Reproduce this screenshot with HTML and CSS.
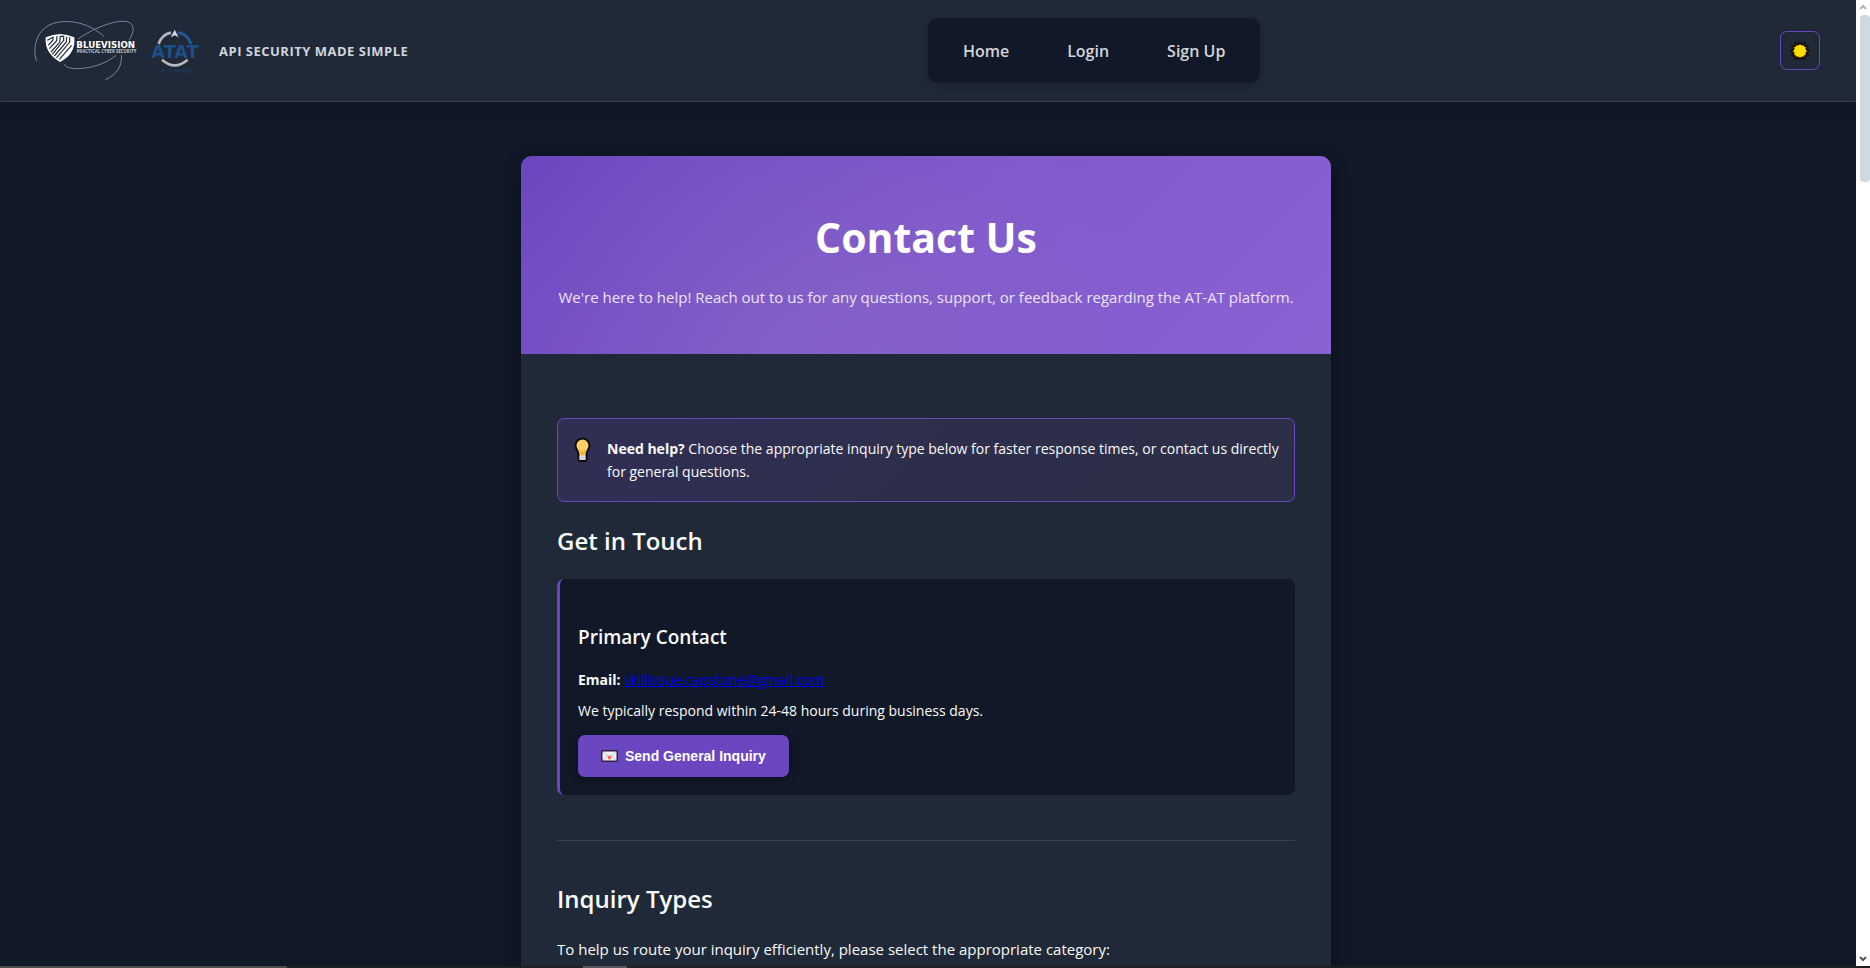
FILE: index.html
```html
<!DOCTYPE html>
<html lang="en">

<head>
  <meta charset="UTF-8">
  <meta name="viewport" content="width=device-width, initial-scale=1.0">
  <title>Contact Us</title>
  <link rel="stylesheet" href="styles.css">
</head>

<body>
  <div class="screen">
    <div class="page">
      <header class="header">
        <div class="brand">
          <svg class="logo-bluevision" viewBox="96 60 315 183" role="img" aria-label="Bluevision">
            <g fill="none" stroke="#8b98a9" stroke-width="2.5">
              <path d="M109 182C96 140 112 92 150 74c50-22 122-4 162 36" />
              <path d="M234 117c40-28 110-60 148-52 22 6 22 30 6 54" />
              <path d="M192 192c8 24 104 18 156-26" />
              <path d="M364 165c4 30-14 60-48 74" />
            </g>
            <path fill="#fff" d="M137 112q22-9 43-10 22 1 43 10 5 50-43 74-47-26-43-74z" />
            <g fill="none" stroke="#1f2937" stroke-width="3.500">
              <path d="M142 121l17-9v8l-14 16" />
              <path d="M148 146l22-24 1-14" />
              <path d="M153 156l26-29 2-18h10v12l-34 42" />
              <path d="M163 168l36-42 1-16" />
              <path d="M169 174l40-48v-14" />
              <path d="M178 178l37-42" />
            </g>
            <text class="logo-name" x="229" y="143">BLUEVISION</text>
            <text class="logo-tag" x="230" y="158">PRACTICAL CYBER SECURITY</text>
          </svg>
          <svg class="logo-atat" viewBox="447 84 156 138" role="img" aria-label="ATAT API Scanner">
            <g fill="none" stroke-width="8">
              <path stroke="#b5b8bd" d="M476 132a50 50 0 0 1 37-34" />
              <path stroke="#235b97" d="M533 97a50 50 0 0 1 40 35" />
              <path stroke="#b5b8bd" d="M486 179q38 34 77 0" />
            </g>
            <path fill="#d5d7da" d="M524 89l12 23-12-6-12 6z" />
            <text class="logo-word" x="525" y="175">ATAT</text>
            <text class="logo-scan" x="526" y="219">API SCANNER</text>
          </svg>
          <span class="tagline">API Security Made Simple</span>
        </div>

        <nav class="nav">
          <a href="#home">Home</a>
          <a href="#login">Login</a>
          <a href="#signup">Sign Up</a>
        </nav>

        <button class="theme-toggle" type="button" aria-label="Toggle theme">
          <svg width="20" height="20" viewBox="-10 -10 20 20">
            <path fill="#ffa000" stroke="#16130c" stroke-width="2" d="M0-9L2-6 4.500-7.800 5-5 7.800-4.500 6-2 9 0 6 2 7.800 4.500 5 5 4.500 7.800 2 6 0 9-2 6-4.500 7.800-5 5-7.800 4.500-6 2-9 0-6-2-7.800-4.500-5-5-4.500-7.800-2-6z" />
            <circle r="6" fill="#ffde00" />
          </svg>
        </button>
      </header>

      <main class="main">
        <article class="card">
          <div class="hero">
            <h1>Contact Us</h1>
            <p>We're here to help! Reach out to us for any questions, support, or feedback regarding the AT-AT platform.</p>
          </div>

          <div class="content">
            <div class="callout">
              <svg class="bulb" width="17" height="26" viewBox="0 0 17 26">
                <path fill="#ffd067" stroke="#0b0b0b" stroke-width="2" d="M8.500 1.500a7 7 0 0 1 7 7c0 4-3 5-3 9v4.500q0 2-2 2h-4q-2 0-2-2v-4.500c0-4-3-5-3-9a7 7 0 0 1 7-7z" />
                <path fill="#d7d4df" d="M5.500 18.500h6V23h-6z" />
                <path fill="none" stroke="#f0a71c" d="M5.500 13l1.500 2v3M11.500 13l-1.500 2v3M8.500 14v4" />
              </svg>
              <p><strong>Need help?</strong> Choose the appropriate inquiry type below for faster response times, or contact us directly for general questions.</p>
            </div>

            <h2>Get in Touch</h2>
            <section class="contact-box">
              <h3>Primary Contact</h3>
              <p><strong>Email:</strong> <a href="mailto:skillissue.capstone@gmail.com">skillissue.capstone@gmail.com</a></p>
              <p>We typically respond within 24-48 hours during business days.</p>
              <button class="btn" type="button">
                <svg width="17" height="12" viewBox="0 0 17 12">
                  <rect x=".75" y=".75" width="15.500" height="10.500" rx="1" fill="#f1f1f3" stroke="#2c2143" stroke-width="1.500" />
                  <path fill="none" stroke="#c4c4cc" d="M2 2l6.500 5L15 2M2 10l4-4M15 10l-4-4" />
                  <circle cx="8.500" cy="7.500" r="2" fill="#f5705c" />
                </svg>
                <span>Send General Inquiry</span>
              </button>
            </section>

            <hr>

            <h2>Inquiry Types</h2>
            <p class="intro">To help us route your inquiry efficiently, please select the appropriate category:</p>
          </div>
        </article>
      </main>
    </div>

    <div class="scrollbar">
      <svg width="8" height="6" viewBox="0 0 8 6"><path d="M1 5l3-3 3 3" /></svg>
      <div class="thumb"></div>
      <svg class="down" width="8" height="6" viewBox="0 0 8 6"><path d="M1 1l3 3 3-3" /></svg>
    </div>
    <div class="edge"><span class="edge-search"></span><span class="edge-item"></span></div>
  </div>
</body>

</html>
```
FILE: styles.css
```css
* {
  margin: 0;
  padding: 0;
  box-sizing: border-box;
}

body {
  font-family: "Segoe UI", "Open Sans", sans-serif;
  background: #111827;
  color: #f9fafb;
}

.screen {
  display: grid;
  grid-template-columns: 1fr 14px;
  grid-template-rows: 1fr 2px;
  height: 100vh;
  overflow: hidden;
}

.page {
  min-height: 0;
  overflow: hidden;
}

/* Header */
.header {
  display: flex;
  justify-content: space-between;
  align-items: center;
  padding: 18px 36px 18px 32px;
  background: #1f2937;
  border-bottom: 1px solid #374151;
  box-shadow: 0 4px 12px rgba(0, 0, 0, 0.2);
}

.brand {
  display: flex;
  align-items: center;
  gap: 12px;
}

.logo-bluevision {
  width: 105px;
  height: 61px;
}

.logo-atat {
  width: 52px;
  height: 46px;
}

.logo-name {
  font: 700 26px "DejaVu Sans", sans-serif;
  fill: #fff;
}

.logo-tag {
  font: 700 13px "Open Sans", sans-serif;
  fill: #c3c9d1;
}

.logo-word {
  font: 700 53px "DejaVu Sans", sans-serif;
  fill: #1d4f88;
  text-anchor: middle;
}

.logo-scan {
  font: 600 16px "Open Sans", sans-serif;
  fill: #1d3a60;
  text-anchor: middle;
}

.tagline {
  margin-left: 6px;
  font-size: 13px;
  font-weight: 700;
  letter-spacing: 0.5px;
  text-transform: uppercase;
  color: #d1d5db;
}

.nav {
  display: flex;
  gap: 12px;
  padding: 12px;
  background: #111827;
  border-radius: 10px;
  box-shadow: 0 2px 8px rgba(0, 0, 0, 0.2);
}

.nav a {
  padding: 10px 23px 8px;
  font-size: 16px;
  font-weight: 600;
  line-height: 23px;
  color: #d1d5db;
  text-decoration: none;
}

.theme-toggle {
  display: flex;
  align-items: center;
  justify-content: center;
  width: 40px;
  height: 39px;
  background: transparent;
  border: 1px solid #6b46c1;
  border-radius: 7px;
  cursor: pointer;
}

/* Card */
.main {
  padding: 54px 4px 0 0;
}

.card {
  max-width: 810px;
  margin: 0 auto;
  background: #1f2937;
  border-radius: 11px;
  box-shadow: 0 4px 16px rgba(0, 0, 0, 0.4);
  overflow: hidden;
}

.hero {
  padding: 49px 32px 45px;
  background:
    radial-gradient(circle at 35% 100%, rgba(140, 115, 190, 0.35), transparent 60%),
    linear-gradient(135deg, #6b46c1 0%, #8159cd 50%, #8a62d2 100%);
  text-align: center;
}

.hero h1 {
  margin-bottom: 16px;
  font-size: 41px;
  line-height: 64px;
  color: #fff;
}

.hero p {
  font-size: 15px;
  line-height: 24px;
  color: #ebe4f7;
}

.content {
  padding: 64px 36px;
}

.callout {
  display: flex;
  gap: 16px;
  padding: 18px 6px 18px 16px;
  background: linear-gradient(135deg, #312e54, #2b2f45);
  border: 1px solid #6b46c1;
  border-radius: 7px;
}

.bulb {
  flex: none;
}

.callout p,
.contact-box p {
  font-size: 14px;
  line-height: 23px;
}

h2 {
  margin: 20px 0;
  font-size: 24px;
  font-weight: 600;
  line-height: 37px;
}

.contact-box {
  padding: 43px 18px 18px;
  background: #111827;
  border-left: 3px solid #6b46c1;
  border-radius: 7px;
}

.contact-box h3 {
  margin-bottom: 16px;
  font-size: 19px;
  font-weight: 600;
  line-height: 30px;
}

.contact-box p {
  margin-bottom: 8px;
}

.contact-box a {
  color: #0000ee;
}

.btn {
  display: flex;
  align-items: center;
  gap: 7px;
  margin-top: 13px;
  padding: 12px 23px;
  background: #6b46c1;
  border: none;
  border-radius: 7px;
  box-shadow: 0 2px 8px rgba(0, 0, 0, 0.3);
  color: #fff;
  font-family: "Liberation Sans", sans-serif;
  font-size: 14px;
  font-weight: 700;
  line-height: 18px;
  cursor: pointer;
}

hr {
  margin: 45px 0 39px;
  border: none;
  border-top: 1px solid #374151;
}

.intro {
  font-size: 15px;
  line-height: 24px;
}

/* Scrollbar and bottom edge */
.scrollbar {
  display: flex;
  flex-direction: column;
  align-items: center;
  padding: 4px 0;
  background: #fff;
}

.scrollbar path {
  fill: none;
  stroke: #b5b5b5;
  stroke-width: 2;
}

.scrollbar .down path {
  stroke: #555;
}

.thumb {
  align-self: flex-end;
  width: 10px;
  height: 167px;
  margin: 5px 0 auto;
  background: #cfd9e2;
  border-radius: 4px;
}

.edge {
  grid-column: 1 / -1;
  display: flex;
  gap: 296px;
  background: #1d1f23;
}

.edge-search {
  width: 287px;
  background: #4d4a4a;
}

.edge-item {
  width: 44px;
  background: #55575c;
}
```
